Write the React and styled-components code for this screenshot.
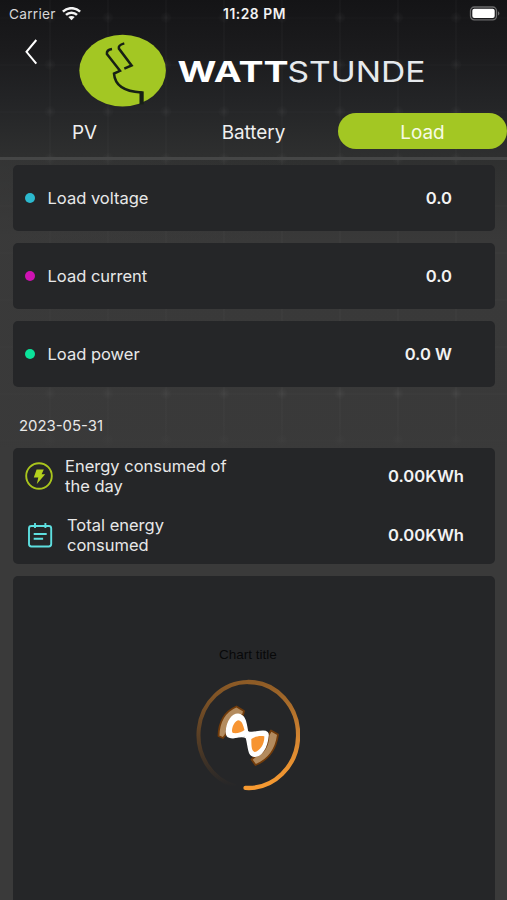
import * as React from "react";
import styled, { createGlobalStyle } from "styled-components";

const GlobalStyle = createGlobalStyle`
  * {
    box-sizing: border-box;
  }

  body {
    margin: 0;
    background: #3a3a3a;
    font-family: Inter, "Liberation Sans", sans-serif;
    color: #e8e8e8;
  }
`;

const Screen = styled.div`
  width: 507px;
  height: 900px;
  overflow: hidden;
  display: flex;
  flex-direction: column;
  /* solar panel grid over a dark fade, plain below the date */
  background:
    linear-gradient(90deg, rgba(58, 58, 58, 0.5), transparent 60%) 0 160px / 100% 290px no-repeat,
    linear-gradient(transparent 420px, #3a3a3a 450px),
    radial-gradient(circle at 50% 50%, rgba(255, 255, 255, 0.035) 1px, transparent 6px) 21px -6px / 58px 47px,
    linear-gradient(90deg, rgba(255, 255, 255, 0.014) 2px, transparent 2px) 49px 0 / 58px 47px,
    linear-gradient(rgba(255, 255, 255, 0.008) 2px, transparent 2px) 0 17px / 58px 47px,
    linear-gradient(#141416 0, #1b1b1d 50px, #232426 100px, #2e2f2f 155px, #393939 240px, #3a3a3a 100%);
`;

const Header = styled.header`
  height: 160px;
  flex: none;
  display: flex;
  flex-direction: column;
  border-bottom: 3px solid #454646;
`;

const StatusBar = styled.div`
  height: 28px;
  padding: 0 7px 0 9px;
  display: grid;
  grid-template-columns: 1fr auto 1fr;
  align-items: center;
  font-size: 13px;
`;

const Carrier = styled.div`
  display: flex;
  align-items: center;
  gap: 6px;
  font-size: 13.7px;
  letter-spacing: 0.25px;
  color: #d6d6d7;
`;

const Clock = styled.div`
  font-size: 13.8px;
  font-weight: 600;
  letter-spacing: 0.55px;
  color: #f2f2f2;
`;

const Battery = styled.svg`
  justify-self: end;
  margin-bottom: 2px;
`;

const Brand = styled.div`
  height: 85px;
  display: flex;
  align-items: flex-start;
  padding-left: 24px;
`;

const BackButton = styled.button`
  width: 14px;
  height: 28px;
  margin: 10px 40px 0 0;
  padding: 0;
  border: 0;
  background: none;
`;

const Mark = styled.svg`
  margin-top: 6px;
`;

const Wordmark = styled.svg`
  margin: 26px 0 0 11px;
`;

const Tabs = styled.nav`
  height: 37px;
  display: grid;
  grid-template-columns: repeat(3, 169px);
`;

const Tab = styled.button`
  height: 36px;
  padding: 2px 0 0;
  border: 0;
  border-radius: 18px;
  background: ${(props) => (props.$active ? "#a3c723" : "transparent")};
  color: ${(props) => (props.$active ? "#f7fbe6" : "#efefef")};
  font: 400 18.9px Inter, sans-serif;
`;

const Content = styled.main`
  flex: 1;
  display: flex;
  flex-direction: column;
  padding: 5px 12px 0 13px;
`;

const Card = styled.section`
  background: #252628;
  border-radius: 5px;
`;

const Reading = styled(Card)`
  height: 66px;
  margin-bottom: 12px;
  padding: 0 43px 0 12px;
  display: flex;
  align-items: center;
`;

const Dot = styled.span`
  width: 10px;
  height: 10px;
  margin-right: 12.5px;
  border-radius: 50%;
  background: ${(props) => props.$color};
`;

const Label = styled.span`
  flex: 1;
  font-size: 16.5px;
`;

const Value = styled.span`
  font-size: 16.6px;
  font-weight: 600;
  color: #f2f2f2;
`;

const DateText = styled.div`
  height: 49px;
  padding: 4px 0 0 6px;
  display: flex;
  align-items: center;
  font-size: 14.9px;
`;

const EnergyCard = styled(Card)`
  height: 116px;
  margin-bottom: 12px;
`;

const EnergyRow = styled.div`
  height: 58.5px;
  padding: 0 31px 2px 12px;
  display: grid;
  grid-template-columns: ${(props) => props.$indent}px 1fr auto;
  align-items: center;
`;

const EnergyLabel = styled.span`
  width: ${(props) => props.$width}px;
  font-size: 16.5px;
  line-height: 20px;
`;

const ChartCard = styled(Card)`
  flex: 1;
  border-radius: 5px 5px 0 0;
  display: flex;
  flex-direction: column;
  align-items: center;
  padding: 71px 12px 0 0;
`;

const ChartTitle = styled.div`
  height: 16px;
  font: 13.5px/16px "Liberation Sans", sans-serif;
  color: #08090a;
`;

const Spinner = styled.svg`
  margin-top: 16px;
`;

const READINGS = [
  { label: "Load voltage", value: "0.0", color: "#2cb9ce" },
  { label: "Load current", value: "0.0", color: "#cf12b3" },
  { label: "Load power", value: "0.0 W", color: "#0be39a" },
];

const WifiIcon = () => (
  <svg width="19" height="15" viewBox="0 0 19 15" fill="none" stroke="#f4f4f4" strokeWidth="2.5">
    <path d="M.9 4.7C5.7 0 13.3 0 18.1 4.7" />
    <path d="M4 7.9c3-2.9 8-2.9 11 0" />
    <path d="M6.3 10.1c1.7-1.6 4.7-1.6 6.4 0l-3.2 3.2z" fill="#f4f4f4" stroke="none" />
  </svg>
);

const BatteryIcon = () => (
  <Battery width="31" height="15" viewBox="0 0 31 15">
    <rect x="1.5" y="1" width="26" height="12.8" rx="3.8" fill="none" stroke="#6b6b6c" strokeWidth="1.3" />
    <rect x="3.3" y="2.8" width="22.4" height="9.2" rx="2" fill="#fff" />
    <path d="M29 5.2q1.4 1 1.4 2.2T29 9.6z" fill="#6b6b6c" />
  </Battery>
);

const BrandMark = () => (
  <Mark width="88" height="73" viewBox="0 0 88 73">
    <ellipse cx="44.6" cy="36.6" rx="43.3" ry="35.8" fill="#a3c723" />
    <g fill="none" stroke="#172015" strokeWidth="2.5">
      <path d="M34 15.1Q28.4 16 28.9 20L42 36.8 36 39.6Q37.3 57 63.2 58.4V68" />
      <path d="M46.3 9.4Q40 11 40.9 14.6L53.6 31.4 46.3 34.6" />
      <path d="M63.6 57.4v13" strokeWidth="4.2" />
    </g>
  </Mark>
);

const BrandText = () => (
  <Wordmark width="250" height="36" viewBox="0 0 250 36">
    <g fontFamily="Inter, sans-serif" fontSize="29">
      <text x="0.5" y="27.6" textLength="111" lengthAdjust="spacingAndGlyphs" fontWeight="700" fill="#fff">
        WATT
      </text>
      <text x="110.5" y="27.6" textLength="138" lengthAdjust="spacingAndGlyphs" fontWeight="400" fill="#e6e9ec">
        STUNDE
      </text>
    </g>
  </Wordmark>
);

const BoltIcon = () => (
  <svg width="28" height="28" viewBox="0 0 28 28">
    <circle cx="14" cy="14" r="12.8" fill="none" stroke="#a9c51d" strokeWidth="1.9" />
    <path d="M11.6 7.6h7.2l-2.2 4.7h3.6l-8.4 9.6 1.5-6.3H8.8z" fill="#b4d11e" />
  </svg>
);

const NotesIcon = () => (
  <svg width="30" height="26" viewBox="0 0 30 26" fill="none" stroke="#5edfe0" strokeWidth="1.9">
    <rect x="4" y="4" width="22.2" height="20.5" rx="2.4" />
    <path d="M10 1.1v5M20.4 1.1v5M8.7 12h13M8.7 16.7h9.4" />
  </svg>
);

const LoadingRing = () => (
  <Spinner width="104" height="112" viewBox="0 0 104 112">
    <defs>
      <linearGradient id="ringRight" x1="0" y1="0" x2="0" y2="1">
        <stop offset="0" stopColor="#8d5b26" />
        <stop offset="0.55" stopColor="#d78731" />
        <stop offset="1" stopColor="#f79a31" />
      </linearGradient>
      <linearGradient id="ringLeft" x1="0" y1="0" x2="0" y2="1">
        <stop offset="0" stopColor="#8d5b26" />
        <stop offset="0.6" stopColor="#503a25" />
        <stop offset="1" stopColor="#252628" />
      </linearGradient>
    </defs>
    <g fill="none" strokeWidth="4">
      <path d="M52 3A49.6 53 0 0 0 40 107.4" stroke="url(#ringLeft)" />
      <path d="M52 3A49.6 53 0 1 1 49.5 108.9" stroke="url(#ringRight)" strokeLinecap="round" strokeWidth="4.3" />
    </g>
    {/* tilted hourglass */}
    <g strokeLinejoin="round" strokeLinecap="round">
      <path d="M40.5 27.5 48 32 47 36Q32 38 29.5 56L27 59 22.5 57Q23 35 40.5 27.5Z" fill="#b38b5e" stroke="#713b0a" strokeWidth="1.8" />
      <path d="M75 51.5 82 55.5Q79 78 59.5 86L55.5 80.5 59 77.5Q72 73 72.5 56Z" fill="#b38b5e" stroke="#713b0a" strokeWidth="1.8" />
      <path
        d="M42 35.3C49 36 50 43 51.5 52.5 56 55 60 52.3 67 52.3 71 52.3 72.5 54 72 57 71 69 65 77.5 58.7 77.3 52 77 53 69 50.5 59 46 55.5 43 58.7 37 58.7 31 58.5 30 56 30.3 52 31.5 42 36 35.5 42 35.3Z"
        fill="#fff"
        stroke="#fff"
        strokeWidth="1.4"
      />
      <path d="M42 41.3C46 41.5 47 46 48.5 51 46 53.5 41 54.5 37 54 34.5 53 37 43 42 41.3Z" fill="#f79431" />
      <path d="M55.3 60C59 57.3 64 56.3 68.3 57.3 68.7 65 64 72 58.7 73 55 72 55.5 65 55.3 60Z" fill="#f79431" />
    </g>
  </Spinner>
);

const App = () => {
  return (
    <Screen>
      <GlobalStyle />
      <Header>
        <StatusBar>
          <Carrier>
            Carrier
            <WifiIcon />
          </Carrier>
          <Clock>11:28 PM</Clock>
          <BatteryIcon />
        </StatusBar>
        <Brand>
          <BackButton aria-label="Back">
            <svg width="14" height="28" viewBox="0 0 14 28" fill="none" stroke="#fff" strokeWidth="2">
              <path d="M12.3 2 2.5 13.8l9.8 11.8" />
            </svg>
          </BackButton>
          <BrandMark />
          <BrandText />
        </Brand>
        <Tabs>
          <Tab>PV</Tab>
          <Tab>Battery</Tab>
          <Tab $active>Load</Tab>
        </Tabs>
      </Header>

      <Content>
        {READINGS.map((item) => (
          <Reading key={item.label}>
            <Dot $color={item.color} />
            <Label>{item.label}</Label>
            <Value>{item.value}</Value>
          </Reading>
        ))}

        <DateText>2023-05-31</DateText>

        <EnergyCard>
          <EnergyRow $indent={40}>
            <BoltIcon />
            <EnergyLabel $width={180}>Energy consumed of the day</EnergyLabel>
            <Value>0.00KWh</Value>
          </EnergyRow>
          <EnergyRow $indent={42}>
            <NotesIcon />
            <EnergyLabel $width={130}>Total energy consumed</EnergyLabel>
            <Value>0.00KWh</Value>
          </EnergyRow>
        </EnergyCard>

        <ChartCard>
          <ChartTitle>Chart title</ChartTitle>
          <LoadingRing />
        </ChartCard>
      </Content>
    </Screen>
  );
};

export default App;
